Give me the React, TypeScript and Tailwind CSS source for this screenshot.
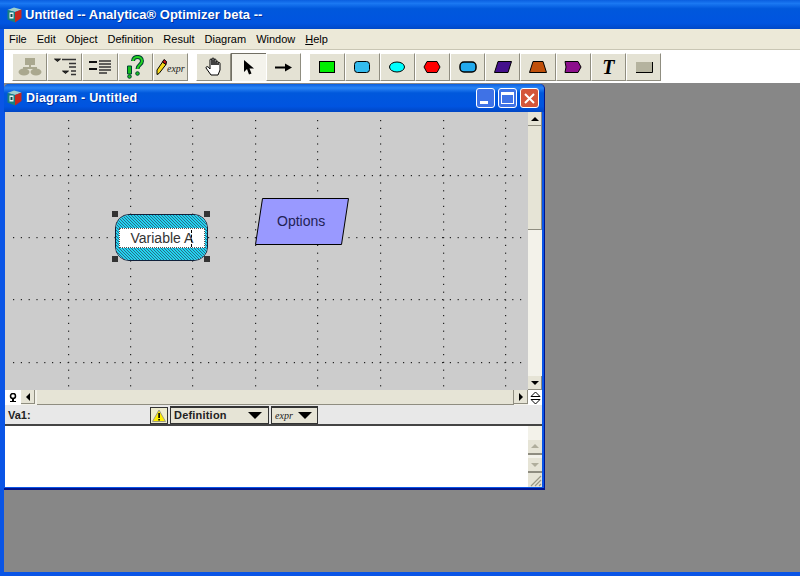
import React from "react";

const Logo = () => (
  <svg width="15" height="16" viewBox="0 0 15 16" className="shrink-0">
    <path d="M0.500 3 L7 0.500 L14.500 2.500 L8 5 Z" fill="#9fd0cc" />
    <path d="M0.500 3 L8 5 L8 15.500 L0.500 12.500 Z" fill="#17807e" />
    <path d="M8 5 L14.500 2.500 L14.500 11 L8 15.500 Z" fill="#c8281e" />
    <rect x="2.500" y="5.500" width="4" height="6" fill="#e8f4f4" />
    <path d="M3.500 7h2v3h-2z" fill="#0b4a50" />
  </svg>
);

const TB = ({ children, active }: { children?: React.ReactNode; active?: boolean }) => (
  <div
    className={
      active
        ? "w-[35px] h-[28px] flex items-center justify-center bg-[#f4f3ec] border-t border-l border-[#716f64] border-r-white border-b-white"
        : "w-[35.2px] h-[28px] flex items-center justify-center bg-[#e4e2d4] border-r border-b border-[#8f8d80] border-l border-t border-l-white border-t-white"
    }
  >
    {children}
  </div>
);

const Shape = ({ children }: { children: React.ReactNode }) => (
  <svg width="18" height="12" viewBox="0 0 18 12">
    {children}
  </svg>
);

const Arrow = ({ d, c = "#000" }: { d: string; c?: string }) => (
  <svg width="12" height="12" viewBox="0 0 12 12">
    <path d={d} fill={c} />
  </svg>
);

const ScrollBtn = ({ children }: { children: React.ReactNode }) => (
  <div className="w-[14px] h-[14px] shrink-0 flex items-center justify-center bg-[#e6e4d6] border-r border-b border-[#8f8d80]">
    {children}
  </div>
);

const Track = ({ className }: { className: string }) => (
  <div className={"bg-[#f3f2ea] " + className} />
);

const WinBtn = ({ children, red }: { children: React.ReactNode; red?: boolean }) => (
  <div
    className={
      "w-[19px] h-[20px] rounded-[3px] border border-white flex items-center justify-center " +
      (red ? "bg-[#d4553a]" : "bg-[#3f72e6]")
    }
  >
    {children}
  </div>
);

const Handle = ({ className }: { className: string }) => (
  <div className={"absolute w-[6px] h-[6px] bg-[#333333] " + className} />
);

const menus = ["File", "Edit", "Object", "Definition", "Result", "Diagram", "Window"];
const rows = [63, 125, 187, 250];
const cols = [63, 125, 187, 250, 312, 375, 438, 500];
const stepsX = Array.from({ length: 66 }, (_, i) => 8 + i * 7.8);
const stepsY = Array.from({ length: 35 }, (_, i) => 8 + i * 7.8);

export default function App() {
  return (
    <div className="w-[800px] h-[576px] flex flex-col overflow-hidden bg-[#878787] font-['Liberation_Sans',sans-serif]">
      <div className="h-[29px] shrink-0 flex items-center pl-[7px] gap-[3px] bg-[linear-gradient(to_bottom,#0a5fe0_0%,#1a78f2_12%,#0058dc_30%,#0054e0_80%,#0048c8_100%)]">
        <Logo />
        <span className="text-white text-[13px] font-bold whitespace-pre [text-shadow:1px_1px_0_#00309c]">
          Untitled -- Analytica® Optimizer beta --
        </span>
      </div>

      <div className="flex-1 flex flex-col border-l-4 border-b-4 border-[#0a55e6] min-h-0">
        <div className="h-[21px] shrink-0 bg-[#ece9d8] border-b border-[#c9c6b4] flex items-center text-[11px] text-black pl-[5px] gap-[10px]">
          {menus.map((m) => (
            <span key={m}>{m}</span>
          ))}
          <span>
            <span className="underline">H</span>elp
          </span>
        </div>

        <div className="h-[33px] shrink-0 bg-white flex items-center pl-[8px] pt-[1px]">
          <div className="flex">
            <TB>
              <svg width="24" height="20" viewBox="0 0 24 20">
                <g fill="#aaa88f">
                  <rect x="7" y="1" width="10" height="7" />
                  <path d="M11 8h2v3h-2zM5 10h14v2H5z" />
                  <ellipse cx="6" cy="15" rx="5.500" ry="3.500" />
                  <ellipse cx="18" cy="15" rx="5.500" ry="3.500" />
                </g>
              </svg>
            </TB>
            <TB>
              <svg width="24" height="22" viewBox="0 0 24 22">
                <path d="M1.500 3h6l-3 2.500zM9.500 15h6l-3 2.500z" fill="#333" stroke="#000" strokeWidth="0.800" />
                <path d="M9 3.500h14M16 7.500h7M16 11h7M18 15h5M18 18.500h5" stroke="#333" strokeWidth="1.300" />
              </svg>
            </TB>
            <TB>
              <svg width="24" height="16" viewBox="0 0 24 16">
                <path d="M1 3h8M1 10h8" stroke="#111" strokeWidth="2" />
                <path d="M11 2h12M11 5h12M11 8h12M11 11h12M11 14h8" stroke="#333" strokeWidth="1.300" />
              </svg>
            </TB>
            <TB>
              <svg width="18" height="24" viewBox="0 0 18 24">
                <path d="M1.500 11h4v8h-4z" fill="#16c01e" stroke="#043" />
                <circle cx="3.500" cy="21.500" r="1.800" fill="#16c01e" stroke="#043" />
                <path d="M7 6 C7 0.500 16 0.500 16 6 C16 10 11.500 9.500 11.500 14" fill="none" stroke="#043" strokeWidth="4" />
                <path d="M7 6 C7 0.500 16 0.500 16 6 C16 10 11.500 9.500 11.500 14" fill="none" stroke="#22d422" strokeWidth="2" />
                <circle cx="11.500" cy="18.500" r="1.800" fill="#16c01e" stroke="#043" />
              </svg>
            </TB>
            <TB>
              <div className="flex items-center">
                <svg width="11" height="18" viewBox="0 0 11 18">
                  <path d="M6.500 4 L10 6.500 L3 15.500 L1 16.500 L1 12 Z" fill="#f6d81a" stroke="#000" />
                  <path d="M6.500 4 L8 1.500 L10.500 3.500 L10 6.500 Z" fill="#d01818" stroke="#000" />
                </svg>
                <span className="italic text-[10px] font-['Liberation_Serif',serif] text-[#222] leading-none mt-[3px]">expr</span>
              </div>
            </TB>
          </div>

          <div className="flex ml-[8px]">
            <TB>
              <svg width="18" height="20" viewBox="0 0 18 20">
                <path
                  d="M5 10V3a1 1 0 0 1 2 0v5V2a1 1 0 0 1 2 0v6V3a1 1 0 0 1 2 0v5V5a1 1 0 0 1 2 0v3V6.500a1 1 0 0 1 2 0V13l-2 5H6L1 11c0-2 2-2 4 1z"
                  fill="#fff"
                  stroke="#000"
                  strokeWidth="1"
                />
              </svg>
            </TB>
            <TB active>
              <svg width="12" height="17" viewBox="0 0 12 17">
                <path d="M1 1 L1 13 L4 10 L6 15.500 L8.500 14.500 L6.500 9.500 L11 9.500 Z" fill="#000" />
              </svg>
            </TB>
            <TB>
              <svg width="17" height="9" viewBox="0 0 17 9">
                <path d="M0 3.500h10v2H0z" fill="#000" />
                <path d="M10 0.500 L17 4.500 L10 8.500 Z" fill="#000" />
              </svg>
            </TB>
          </div>

          <div className="flex ml-[8px]">
            <TB>
              <Shape>
                <rect x="1.500" y="0.500" width="15" height="11" fill="#00ee00" stroke="#000" />
              </Shape>
            </TB>
            <TB>
              <Shape>
                <rect x="1.500" y="0.500" width="15" height="11" rx="3" fill="#33bbee" stroke="#000" />
              </Shape>
            </TB>
            <TB>
              <Shape>
                <ellipse cx="9" cy="6" rx="7.500" ry="5" fill="#00ffff" stroke="#000" />
              </Shape>
            </TB>
            <TB>
              <Shape>
                <path d="M4 0.500h10l3 5.500-3 5.500H4L1 6z" fill="#ff0000" stroke="#000" />
              </Shape>
            </TB>
            <TB>
              <Shape>
                <rect x="1" y="1" width="16" height="10" rx="4" fill="#22aaee" stroke="#000" strokeWidth="1.500" />
              </Shape>
            </TB>
            <TB>
              <Shape>
                <path d="M4 0.500h13.500l-3.500 11H0.500z" fill="#44108c" stroke="#000" />
              </Shape>
            </TB>
            <TB>
              <Shape>
                <path d="M4 0.500h10l3.500 11H0.500z" fill="#c0500a" stroke="#000" />
              </Shape>
            </TB>
            <TB>
              <Shape>
                <path d="M1 0.500h13l3 5.500-3 5.500H1l1-5.500z" fill="#8c0f8c" stroke="#000" />
              </Shape>
            </TB>
            <TB>
              <span className="font-['Liberation_Serif',serif] italic font-bold text-[20px] leading-none text-black">T</span>
            </TB>
            <TB>
              <Shape>
                <rect x="1" y="1" width="16" height="10" fill="#b5b39f" />
                <path d="M1 11.500h16.500V1" fill="none" stroke="#000" />
              </Shape>
            </TB>
          </div>
        </div>

        <div className="flex-1 min-h-0 pt-[1px]">
          <div className="w-[541px] h-[406px] flex flex-col rounded-t-[5px] bg-[#0a55e6] border-r border-b-2 border-[#00148c]">
            <div className="h-[28px] shrink-0 rounded-t-[5px] flex items-center pl-[3px] pr-[5px] gap-[4px] bg-[linear-gradient(to_bottom,#0a5fe0_0%,#2a84f4_14%,#0058dc_32%,#0054e0_80%,#0046c4_100%)]">
              <Logo />
              <span className="text-white text-[12.5px] font-bold tracking-[0.2px] [text-shadow:1px_1px_0_#00309c] flex-1">
                Diagram - Untitled
              </span>
              <div className="flex gap-[3px]">
                <WinBtn>
                  <div className="w-[8px] h-[3px] bg-white mt-[9px] -ml-[4px]" />
                </WinBtn>
                <WinBtn>
                  <div className="w-[13px] h-[12px] border border-white border-t-[3px]" />
                </WinBtn>
                <WinBtn red>
                  <svg width="13" height="13" viewBox="0 0 13 13">
                    <path d="M2 2 L11 11 M11 2 L2 11" stroke="#fff" strokeWidth="2" />
                  </svg>
                </WinBtn>
              </div>
            </div>

            <div className="flex-1 min-h-0 flex flex-col ml-[1px] mr-[2px] mb-[1px] bg-white">
              <div className="flex h-[278px] shrink-0">
                <div className="relative w-[523px] bg-[#cccccc] overflow-hidden">
                  <svg width="523" height="278" className="absolute left-0 top-0">
                    <g fill="#222">
                      {rows.flatMap((y) => stepsX.map((x) => <rect key={`r${y}-${x}`} x={x} y={y} width="1.200" height="1.200" />))}
                      {cols.flatMap((x) => stepsY.map((y) => <rect key={`c${x}-${y}`} x={x} y={y} width="1.200" height="1.200" />))}
                    </g>
                  </svg>

                  <div className="absolute left-[110px] top-[102px] w-[93px] h-[47px] rounded-[14px] border border-[#10203a] overflow-hidden flex items-center justify-center">
                    <svg width="93" height="47" className="absolute left-0 top-0">
                      <defs>
                        <pattern id="hatch" width="3" height="3" patternUnits="userSpaceOnUse">
                          <rect width="3" height="3" fill="#22d4f0" />
                          <rect x="0" y="0" width="1" height="1" fill="#2a6a88" />
                          <rect x="1" y="1" width="1" height="1" fill="#2a6a88" />
                          <rect x="2" y="2" width="1" height="1" fill="#2a6a88" />
                        </pattern>
                      </defs>
                      <rect width="93" height="47" fill="url(#hatch)" />
                    </svg>
                    <div className="relative w-[86px] h-[20px] bg-white border border-dotted border-[#555] text-[14px] leading-[18px] text-[#333] pl-[11px] whitespace-nowrap">
                      Variable A
                      <span className="absolute left-[71px] top-[1px] h-[17px] border-l border-dashed border-black" />
                    </div>
                  </div>
                  <Handle className="left-[107px] top-[99px]" />
                  <Handle className="left-[199px] top-[99px]" />
                  <Handle className="left-[107px] top-[144px]" />
                  <Handle className="left-[199px] top-[144px]" />

                  <svg width="96" height="50" className="absolute left-[249px] top-[85px]">
                    <path d="M8.500 1.500 H94.500 L87.500 47.500 H1.500 Z" fill="#9999ff" stroke="#000" />
                  </svg>
                  <span className="absolute left-[272px] top-[100px] text-[14px] leading-[18px] text-[#222255]">Options</span>
                </div>
                <div className="w-[14px] flex flex-col bg-[#f3f2ea]">
                  <ScrollBtn>
                    <Arrow d="M6 4 L10 8 H2 Z" />
                  </ScrollBtn>
                  <div className="h-[104px] shrink-0 bg-[#e6e4d6] border-r border-b border-[#8f8d80]" />
                  <Track className="flex-1" />
                  <ScrollBtn>
                    <Arrow d="M6 8 L10 4 H2 Z" />
                  </ScrollBtn>
                </div>
              </div>

              <div className="h-[16px] shrink-0 flex bg-[#f3f2ea] border-b border-[#e8e8e8]">
                <div className="w-[16px] h-[15px] bg-white flex items-center justify-center">
                  <svg width="8" height="10" viewBox="0 0 8 10">
                    <circle cx="4" cy="3" r="2.500" fill="none" stroke="#000" strokeWidth="1.500" />
                    <path d="M3 5h2v4H3zM1 8h6v1H1z" fill="#000" />
                  </svg>
                </div>
                <ScrollBtn>
                  <Arrow d="M4 6 L8 2 V10 Z" />
                </ScrollBtn>
                <Track className="w-[2px]" />
                <div className="w-[477px] h-[15px] bg-[#e6e4d6] border-r border-b border-[#8f8d80]" />
                <ScrollBtn>
                  <Arrow d="M8 6 L4 2 V10 Z" />
                </ScrollBtn>
                <div className="w-[14px] h-[15px] bg-white flex items-center justify-center">
                  <svg width="13" height="14" viewBox="0 0 13 14">
                    <path d="M6.500 1 L11 5.500 H2 Z M2 8.500 H11 L6.500 13 Z" fill="#fff" stroke="#000" />
                  </svg>
                </div>
              </div>

              <div className="h-[20px] shrink-0 bg-[#e8e8e8] border-b-2 border-[#444] flex items-center">
                <span className="w-[145px] pl-[3px] text-[11px] font-bold text-[#222] leading-none">Va1:</span>
                <div className="w-[18px] h-[17px] border border-[#333] bg-[#eeeccc] flex items-center justify-center">
                  <svg width="14" height="13" viewBox="0 0 14 13">
                    <path d="M7 1 L13.500 12.500 H0.500 Z" fill="#ffee00" stroke="#888" strokeWidth="0.800" />
                    <path d="M6.300 4h1.600v5H6.300zM6.300 10h1.600v1.500H6.300z" fill="#000" />
                  </svg>
                </div>
                <div className="w-[99px] h-[18px] ml-[2px] border border-t-2 border-[#333] bg-[#e6e4d6] flex items-center justify-between pl-[3px] pr-[6px]">
                  <span className="text-[11px] font-bold text-[#222] tracking-[0.2px] leading-none">Definition</span>
                  <svg width="14" height="7" viewBox="0 0 14 7">
                    <path d="M0 0h14L7 7z" fill="#000" />
                  </svg>
                </div>
                <div className="w-[47px] h-[18px] ml-[2px] border border-t-2 border-[#333] bg-[#e6e4d6] flex items-center justify-between pl-[3px] pr-[5px]">
                  <span className="italic text-[10px] font-['Liberation_Serif',serif] text-[#222] leading-none">expr</span>
                  <svg width="14" height="7" viewBox="0 0 14 7">
                    <path d="M0 0h14L7 7z" fill="#000" />
                  </svg>
                </div>
              </div>

              <div className="flex-1 min-h-0 flex bg-white">
                <div className="w-[523px]" />
                <div className="w-[14px] flex flex-col bg-[#f3f2ea]">
                  <div className="h-[14px]" />
                  <div className="h-[15px] flex items-center justify-center bg-[#e6e4d6] border-b-2 border-[#8f8d80]">
                    <Arrow d="M6 3 L10 7 H2 Z" c="#b0ae9c" />
                  </div>
                  <div className="flex-1" />
                  <div className="h-[15px] flex items-center justify-center bg-[#e6e4d6] border-b-2 border-[#8f8d80]">
                    <Arrow d="M6 8 L10 4 H2 Z" c="#b0ae9c" />
                  </div>
                  <div className="h-[14px] flex items-end justify-end bg-[#e6e4d6]">
                    <svg width="13" height="13" viewBox="0 0 13 13">
                      <path d="M12 2 L2 12 M12 6 L6 12 M12 10 L10 12" stroke="#9a9886" strokeWidth="1.200" />
                    </svg>
                  </div>
                </div>
              </div>
            </div>
          </div>
        </div>
      </div>
    </div>
  );
}
